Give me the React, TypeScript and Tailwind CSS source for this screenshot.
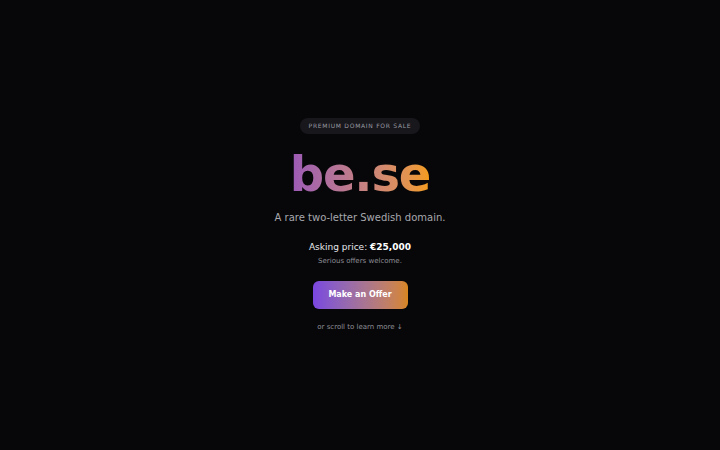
export default function App() {
  return (
    <div
      className="flex h-[450px] w-full flex-col items-center bg-[#070709] pt-[118px] text-center"
      style={{ fontFamily: '"DejaVu Sans", sans-serif' }}
    >
      <div className="flex h-[16px] items-center rounded-full bg-[#17171c] px-[9px] text-[6px] uppercase leading-none tracking-[0.12em] text-[#9a9aa2]">
        Premium domain for sale
      </div>
      <h1 className="mt-[16px] bg-gradient-to-r from-[#9b59b6] to-[#f39c12] bg-clip-text text-[48px] font-bold leading-none tracking-tight text-transparent">
        be.se
      </h1>
      <p className="mt-[13px] text-[10px] leading-[14px] text-[#a8a8ae]">A rare two-letter Swedish domain.</p>
      <p className="mt-[16px] text-[9px] leading-[12px] text-[#e8e8ec]">
        Asking price: <span className="font-bold text-white">€25,000</span>
      </p>
      <p className="mt-[3px] text-[7px] leading-[10px] text-[#8e8e96]">Serious offers welcome.</p>
      <button className="mt-[15px] h-[28px] w-[95px] rounded-md bg-gradient-to-r from-[#7b45e0] to-[#d8861c] text-[8px] font-bold text-white">
        Make an Offer
      </button>
      <p className="mt-[13px] text-[7px] leading-[10px] text-[#8e8e96]">or scroll to learn more ↓</p>
    </div>
  );
}
